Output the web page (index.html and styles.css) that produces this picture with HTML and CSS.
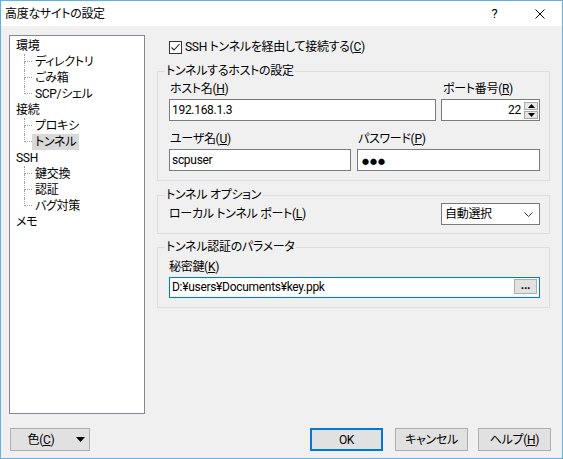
FILE: index.html
```html
<!DOCTYPE html>
<html>
<head>
  <title>高度なサイトの設定</title>
  <meta charset="utf-8">
  <link rel="stylesheet" href="styles.css">
</head>
<body>
  <div class="window">
    <div class="titlebar">
      <span class="title">高度なサイトの設定</span>
      <span class="caption-btn help">?</span>
      <span class="caption-btn close">
        <svg width="10" height="10" viewBox="0 0 10 10"><path d="M0.5 0.5L9.5 9.5M9.5 0.5L0.5 9.5" stroke="#000" stroke-width="1" fill="none"/></svg>
      </span>
    </div>

    <div class="dialog">
      <div class="main">
        <ul class="tree">
          <li>
            <span class="node">環境</span>
            <ul>
              <li><span class="elbow"></span><span class="node">ディレクトリ</span></li>
              <li><span class="elbow"></span><span class="node">ごみ箱</span></li>
              <li><span class="elbow"></span><span class="node">SCP/シェル</span></li>
            </ul>
          </li>
          <li>
            <span class="node">接続</span>
            <ul>
              <li><span class="elbow"></span><span class="node">プロキシ</span></li>
              <li><span class="elbow"></span><span class="node selected">トンネル</span></li>
            </ul>
          </li>
          <li>
            <span class="node">SSH</span>
            <ul>
              <li><span class="elbow"></span><span class="node">鍵交換</span></li>
              <li><span class="elbow"></span><span class="node">認証</span></li>
              <li><span class="elbow"></span><span class="node">バグ対策</span></li>
            </ul>
          </li>
          <li><span class="node">メモ</span></li>
        </ul>

        <div class="panel">
          <div class="check-row">
            <span class="checkbox">
              <svg width="11" height="11" viewBox="0 0 11 11"><path d="M1.5 5.5L4 8L9.5 2" stroke="#222" stroke-width="1.1" fill="none"/></svg>
            </span>
            <span>SSH トンネルを経由して接続する(<u>C</u>)</span>
          </div>

          <fieldset class="group host-group">
            <legend>トンネルするホストの設定</legend>
            <div class="row">
              <div class="field host">
                <div class="label">ホスト名(<u>H</u>)</div>
                <div class="edit">192.168.1.3</div>
              </div>
              <div class="field port">
                <div class="label">ポート番号(<u>R</u>)</div>
                <div class="edit spin">
                  <span class="value">22</span>
                  <span class="spin-btns">
                    <span class="spin-btn"><svg width="7" height="4" viewBox="0 0 7 4"><path d="M3.5 0L7 4H0z" fill="#000"/></svg></span>
                    <span class="spin-btn"><svg width="7" height="4" viewBox="0 0 7 4"><path d="M0 0H7L3.5 4z" fill="#000"/></svg></span>
                  </span>
                </div>
              </div>
            </div>
            <div class="row second">
              <div class="field user">
                <div class="label">ユーザ名(<u>U</u>)</div>
                <div class="edit">scpuser</div>
              </div>
              <div class="field pass">
                <div class="label">パスワード(<u>P</u>)</div>
                <div class="edit"><span class="dots">●●●</span></div>
              </div>
            </div>
          </fieldset>

          <fieldset class="group option-group">
            <legend>トンネル オプション</legend>
            <div class="option-row">
              <span>ローカル トンネル ポート(<u>L</u>)</span>
              <div class="combo">
                <span>自動選択</span>
                <svg width="9" height="5" viewBox="0 0 9 5"><path d="M0.5 0.5L4.5 4.5L8.5 0.5" stroke="#333" stroke-width="1" fill="none"/></svg>
              </div>
            </div>
          </fieldset>

          <fieldset class="group key-group">
            <legend>トンネル認証のパラメータ</legend>
            <div class="label">秘密鍵(<u>K</u>)</div>
            <div class="edit focused">
              <span class="key-path">D:¥users¥Documents¥key.ppk</span>
              <span class="browse">...</span>
            </div>
          </fieldset>
        </div>
      </div>

      <div class="footer">
        <div class="btn color-btn">
          <span class="color-label">色(<u>C</u>)</span>
          <span class="color-arrow"><svg width="9" height="5" viewBox="0 0 9 5"><path d="M0 0H9L4.5 5z" fill="#000"/></svg></span>
        </div>
        <div class="btn default ok">OK</div>
        <div class="btn cancel">キャンセル</div>
        <div class="btn">ヘルプ(<u>H</u>)</div>
      </div>
    </div>
  </div>
</body>
</html>
```

FILE: styles.css
```css
body {
  margin: 0;
  font-family: Roboto, "Noto Sans CJK JP", sans-serif;
  font-size: 12px;
  line-height: 16px;
  font-feature-settings: "palt" 1;
  letter-spacing: -0.3px;
  color: #000;
  background: #fff;
}

.window {
  width: 563px;
  height: 459px;
  box-sizing: border-box;
  border: 1px solid #5eb2e6;
  display: flex;
  flex-direction: column;
}

/* title bar */
.titlebar {
  height: 25px;
  background: #fff;
  display: flex;
  align-items: center;
}

.title {
  flex: 1;
  padding-left: 4px;
  font-size: 12px;
}

.caption-btn {
  width: 45px;
  height: 25px;
  display: flex;
  align-items: center;
  justify-content: center;
}

.caption-btn.help {
  font-size: 13px;
}

/* dialog body */
.dialog {
  flex: 1;
  background: #f0f0f0;
  padding: 9px 11px 0 8px;
}

.main {
  display: flex;
  gap: 12px;
}

/* tree */
.tree {
  list-style: none;
  margin: 0;
  padding: 2px 0 0 0;
  width: 136px;
  height: 379px;
  box-sizing: border-box;
  border: 1px solid #828790;
  background: #fff;
}

.tree ul {
  list-style: none;
  margin: 0;
  padding: 0;
}

.tree > li > .node {
  display: block;
  padding-left: 6px;
  height: 16px;
}

.tree ul li {
  display: flex;
  height: 16px;
}

.elbow {
  display: flex;
  flex-direction: column;
  width: 8px;
  margin-left: 14px;
}

.elbow::before {
  content: "";
  height: 8px;
  box-sizing: border-box;
  border-left: 1px dotted #a0a0a0;
  border-bottom: 1px dotted #a0a0a0;
}

.elbow::after {
  content: "";
  flex: 1;
  border-left: 1px dotted #a0a0a0;
}

.tree ul li:last-child .elbow::after {
  border-left: none;
}

.tree ul .node {
  padding: 0 3px;
}

.node.selected {
  background: #d9d9d9;
}

/* right panel */
.panel {
  width: 393px;
}

.check-row {
  display: flex;
  align-items: center;
  height: 16px;
  margin-top: 4px;
  padding-left: 12px;
}

.checkbox {
  width: 13px;
  height: 13px;
  box-sizing: border-box;
  border: 1px solid #333;
  background: #fff;
  margin-right: 3px;
  display: flex;
  align-items: center;
  justify-content: center;
}

.group {
  margin: 0;
  min-width: 0;
  border: 1px solid #dcdcdc;
  padding: 0 9px 9px 11px;
}

.group legend {
  padding: 0 1px;
  margin-left: -4px;
  line-height: 16px;
}

.host-group {
  margin-top: 8px;
  padding-top: 2px;
}

.option-group {
  margin-top: 6px;
  padding-bottom: 8px;
}

.key-group {
  margin-top: 5px;
  padding-top: 4px;
}

.row {
  display: flex;
  justify-content: space-between;
}

.row.second {
  margin-top: 10px;
}

.label {
  height: 16px;
}

.field .label {
  padding-left: 1px;
}

.edit {
  margin-top: 2px;
  height: 22px;
  box-sizing: border-box;
  border: 1px solid #7a7a7a;
  background: #fff;
  padding: 0 2px;
  line-height: 20px;
}

.host { width: 267px; }
.port { width: 99px; }
.user { width: 182px; }
.pass { width: 183px; }

.port .label {
  padding-left: 2px;
}

.spin {
  display: flex;
  align-items: center;
  justify-content: flex-end;
  padding-right: 1px;
}

.spin .value {
  margin-right: 3px;
}

.spin-btns {
  display: flex;
  flex-direction: column;
  gap: 1px;
}

.spin-btn {
  width: 14px;
  height: 8px;
  box-sizing: border-box;
  border: 1px solid #a8a8a8;
  background: #e6e6e6;
  display: flex;
  align-items: center;
  justify-content: center;
}

.dots {
  font-size: 7px;
  letter-spacing: 1px;
  padding-left: 2px;
}

.option-row {
  display: flex;
  align-items: center;
  justify-content: space-between;
}

.combo {
  width: 99px;
  height: 22px;
  box-sizing: border-box;
  border: 1px solid #7a7a7a;
  background: #fff;
  display: flex;
  align-items: center;
  justify-content: space-between;
  padding: 0 6px 0 3px;
}

.key-group .edit {
  height: 21px;
  display: flex;
  align-items: flex-start;
  justify-content: space-between;
  line-height: 19px;
}

.edit.focused {
  border-color: #0078d7;
}

.browse {
  width: 23px;
  height: 15px;
  box-sizing: border-box;
  margin-top: 1px;
  border: 1px solid #adadad;
  background: #e1e1e1;
  line-height: 10px;
  text-align: center;
  font-size: 12px;
  font-weight: bold;
}

/* footer buttons */
.footer {
  display: flex;
  margin-top: 14px;
  height: 23px;
}

.btn {
  width: 73px;
  height: 23px;
  box-sizing: border-box;
  border: 1px solid #adadad;
  background: #e1e1e1;
  display: flex;
  align-items: center;
  justify-content: center;
}

.btn.default {
  border: 2px solid #0078d7;
}

.color-btn {
  width: 80px;
  margin-left: 1px;
  justify-content: flex-start;
}

.color-label {
  width: 60px;
  text-align: center;
}

.color-arrow {
  width: 18px;
  display: flex;
  justify-content: center;
}

.ok {
  margin-left: auto;
  margin-right: 12px;
}

.cancel {
  margin-right: 10px;
}
```
